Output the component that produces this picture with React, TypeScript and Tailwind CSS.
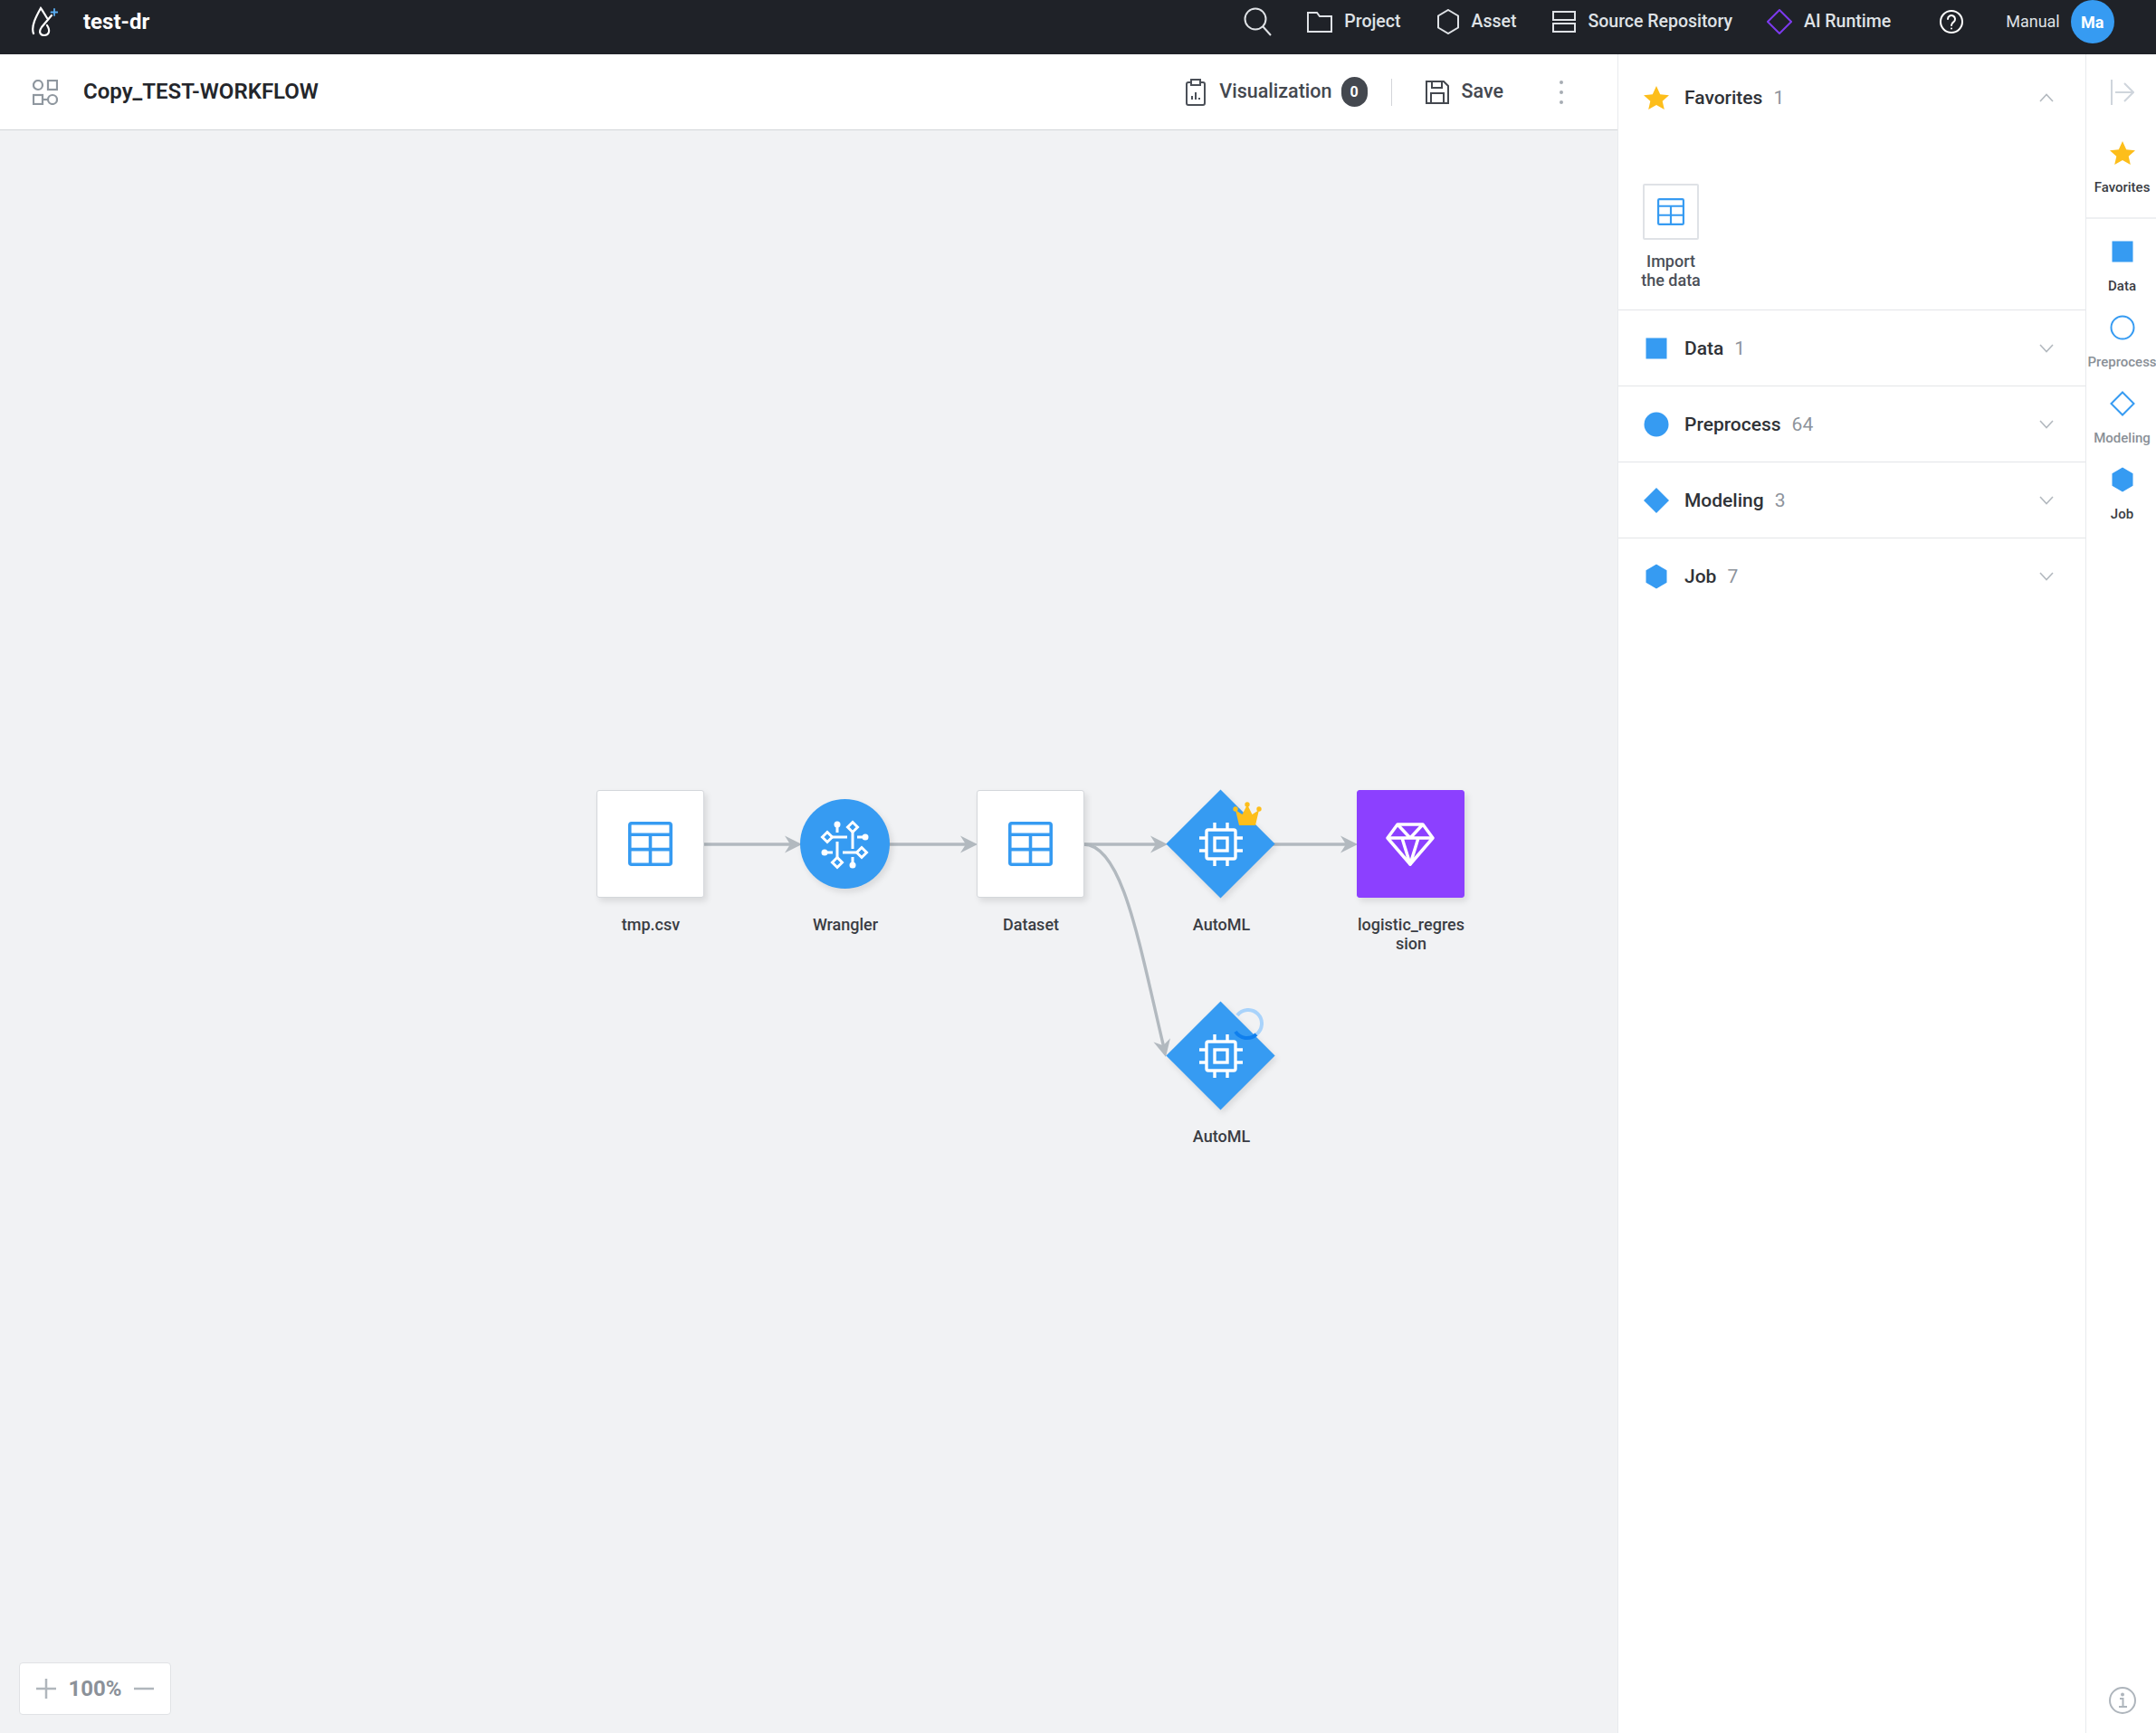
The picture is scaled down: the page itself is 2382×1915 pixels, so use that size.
import type { ReactNode } from "react";

const BLUE = "#369bf2";

function Star({ className }: { className: string }) {
  return (
    <svg viewBox="0 0 28 26" className={className} fill="#fdbe1b">
      <path d="M14 0l4.200 9.200 9.800 1-7.300 6.600 2.100 9.200-8.800-5-8.800 5 2.100-9.200L0 10.200l9.800-1z" />
    </svg>
  );
}

function Shape({ kind, outline }: { kind: "square" | "circle" | "diamond" | "hexagon"; outline?: boolean }) {
  const paint = outline
    ? { fill: "none", stroke: BLUE, strokeWidth: 2 }
    : { fill: BLUE };
  return (
    <svg viewBox="0 0 28 28" className="h-[28px] w-[28px]">
      {kind === "square" && <rect x="2.500" y="2.500" width="23" height="23" {...paint} />}
      {kind === "circle" && <circle cx="14" cy="14" r={outline ? 12.500 : 13.500} {...paint} />}
      {kind === "diamond" && <path d={outline ? "M14 1.500L26.500 14 14 26.500 1.500 14z" : "M14 0L28 14 14 28 0 14z"} {...paint} />}
      {kind === "hexagon" && <path d="M14 0.500L25.500 7.200V20.800L14 27.500 2.500 20.800V7.200z" {...paint} />}
    </svg>
  );
}

function TableIcon({ className, stroke = 3.500 }: { className: string; stroke?: number }) {
  return (
    <svg viewBox="0 0 48 48" className={className} fill="none" stroke={BLUE} strokeWidth={stroke}>
      <rect x="1.750" y="1.750" width="44.500" height="44.500" rx="2" />
      <path d="M1.500 14h45M1.500 30h45M24 14v32" />
    </svg>
  );
}

function ChipIcon() {
  return (
    <svg viewBox="0 0 48 48" className="h-[48px] w-[48px]" fill="none" stroke="#fff" strokeWidth="3.400">
      <rect x="8" y="8" width="32" height="32" rx="2" />
      <rect x="17" y="17" width="14" height="14" />
      <path d="M17 0v8M31 0v8M17 40v8M31 40v8M0 17h8M0 31h8M40 17h8M40 31h8" />
    </svg>
  );
}

function WranglerIcon() {
  return (
    <svg viewBox="0 0 60 60" className="h-[60px] w-[60px]" fill="none" stroke="#fff" strokeWidth="3">
      <path d="M11 22H33M22 9v8M39 11V35M44 22h8M8 39h9M22 27V50M28 39H48M39 44v8" />
      <g fill={BLUE}>
        <path d="M11 16.500L16.500 22 11 27.500 5.500 22z" />
        <path d="M39 5.500L44.500 11 39 16.500 33.500 11z" />
        <path d="M22 44.500L27.500 50 22 55.500 16.500 50z" />
        <path d="M49 33.500L54.500 39 49 44.500 43.500 39z" />
      </g>
      <g fill="#fff" stroke="none">
        <circle cx="22" cy="8" r="3.500" />
        <circle cx="53" cy="22" r="3.500" />
        <circle cx="8" cy="39" r="3.500" />
        <circle cx="39" cy="53" r="3.500" />
      </g>
    </svg>
  );
}

function GemIcon() {
  return (
    <svg viewBox="0 0 54 48" className="h-[48px] w-[54px]" fill="none" stroke="#fff" strokeWidth="3.500" strokeLinejoin="round">
      <path d="M13 2H41L52 17 27 46 2 17z" />
      <path d="M2 17H52M13 2L27 17 41 2M18 17L27 46 36 17" />
    </svg>
  );
}

function Crown() {
  return (
    <svg viewBox="0 0 32 26" className="h-[26px] w-[32px]" fill="#fdbe1b">
      <path d="M7 26L3 9l7.500 5L16 3l5.500 11L29 9l-4 17z" />
      <circle cx="3" cy="8" r="2.700" />
      <circle cx="16" cy="3" r="2.700" />
      <circle cx="29" cy="8" r="2.700" />
    </svg>
  );
}

function Spinner() {
  return (
    <svg viewBox="0 0 36 36" className="h-[36px] w-[36px]" fill="none" strokeWidth="4">
      <path d="M7 8A15 15 0 1 1 28 29" stroke="#a9d3fb" />
      <path d="M28 29A15 15 0 0 1 5 26" stroke="#0f7fee" />
    </svg>
  );
}

function SquareNode({ className, children }: { className: string; children: ReactNode }) {
  return (
    <div className={`flex h-[119px] w-[119px] items-center justify-center rounded-[3px] border shadow-[3px_4px_7px_rgba(0,0,0,0.1)] ${className}`}>
      {children}
    </div>
  );
}

function DiamondNode() {
  return (
    <div className="relative flex h-[119px] w-[119px] items-center justify-center">
      <div className="absolute left-[17px] top-[17px] h-[85px] w-[85px] rotate-45 bg-[#369bf2] shadow-[4px_1px_7px_rgba(0,0,0,0.1)]" />
      <div className="relative">
        <ChipIcon />
      </div>
    </div>
  );
}

function NodeLabel({ children }: { children: ReactNode }) {
  return (
    <div className="mt-[19px] w-[120px] translate-x-px break-all text-center text-[18px] font-medium leading-[21px] text-[#3a3d43]">
      {children}
    </div>
  );
}

function Arrow({ x, y, angle = 0 }: { x: number; y: number; angle?: number }) {
  return <path d="M0 0L-19 -9.500L-13 0L-19 9.500z" fill="#b2b9bf" transform={`translate(${x} ${y}) rotate(${angle})`} />;
}

function Edges() {
  return (
    <svg className="absolute inset-0 h-full w-full" viewBox="0 144 1787 1771" fill="none" stroke="#b2b9bf" strokeWidth="3.400">
      <path d="M776 933H875" />
      <path d="M982 933H1070" />
      <path d="M1197 933H1280" />
      <path d="M1406 933H1490" />
      <path d="M1197 933C1240 933 1258 1040 1286 1158" />
      <g stroke="none">
        <Arrow x={886} y={933} />
        <Arrow x={1080} y={933} />
        <Arrow x={1290} y={933} />
        <Arrow x={1500} y={933} />
        <Arrow x={1288} y={1168} angle={77} />
      </g>
    </svg>
  );
}

function NavItem({ icon, label, className }: { icon: ReactNode; label: string; className: string }) {
  return (
    <div className={`flex items-center gap-[13px] ${className}`}>
      {icon}
      <span className="text-[19.500px] font-medium text-[#dfe2e6]">{label}</span>
    </div>
  );
}

function TopBar() {
  return (
    <header className="flex h-[60px] items-center bg-[#1f2228] pb-[12px]">
      <svg viewBox="0 0 30 34" className="ml-[34px] h-[34px] w-[30px]" fill="none" stroke="#fff" strokeWidth="2.200" strokeLinecap="round">
        <path d="M3 30C0 22 6 11 11 2C14 6 16 10 18 13" />
        <path d="M23 10L12 23C8 29 11 32 15 32C20 32 22 27 18 21" />
        <path d="M26 3v7M22.500 6.500h7" stroke="#5aaef2" strokeWidth="1.800" />
      </svg>
      <span className="ml-[28px] text-[24px] font-bold leading-none text-white">test-dr</span>

      <svg viewBox="0 0 32 32" className="ml-[1208px] h-[32px] w-[32px]" fill="none" stroke="#dfe2e6" strokeWidth="2">
        <circle cx="14" cy="13" r="11.500" />
        <path d="M22 21l9 10" />
      </svg>
      <NavItem
        className="ml-[39px]"
        label="Project"
        icon={
          <svg viewBox="0 0 28 24" className="h-[24px] w-[28px]" fill="none" stroke="#dfe2e6" strokeWidth="2">
            <path d="M1 2h10l3 4h13v17H1z" />
          </svg>
        }
      />
      <NavItem
        className="ml-[41px]"
        label="Asset"
        icon={
          <svg viewBox="0 0 24 28" className="h-[28px] w-[24px]" fill="none" stroke="#dfe2e6" strokeWidth="2">
            <path d="M12 1l11 6.500v13L12 27 1 20.500v-13z" />
          </svg>
        }
      />
      <NavItem
        className="ml-[40px]"
        label="Source Repository"
        icon={
          <svg viewBox="0 0 26 24" className="h-[24px] w-[26px]" fill="none" stroke="#dfe2e6" strokeWidth="2">
            <rect x="1" y="1" width="24" height="9" />
            <rect x="1" y="14" width="24" height="9" />
          </svg>
        }
      />
      <NavItem
        className="ml-[38px]"
        label="AI Runtime"
        icon={
          <svg viewBox="0 0 28 28" className="h-[28px] w-[28px]" fill="none" stroke="#7c3aed" strokeWidth="2">
            <path d="M14 1l13 13-13 13L1 14z" />
          </svg>
        }
      />
      <svg viewBox="0 0 26 26" className="ml-[54px] h-[26px] w-[26px]" fill="none" stroke="#fff" strokeWidth="2">
        <circle cx="13" cy="13" r="12" />
        <path d="M9 10a4 4 0 1 1 6.500 3.200c-1.700 1.100-2.500 1.900-2.500 3.800" strokeLinecap="round" />
        <circle cx="13" cy="20.500" r="1" fill="#fff" stroke="none" />
      </svg>
      <span className="mb-[2px] ml-[47px] text-[18px] text-[#dfe2e6]">Manual</span>
      <div className="ml-[12px] flex h-[48px] w-[48px] items-center justify-center rounded-full bg-[#369bf2] text-[18px] font-bold text-white">
        Ma
      </div>
    </header>
  );
}

function Toolbar() {
  return (
    <div className="flex h-[84px] items-center border-b border-[#d3d5d9] bg-white pl-[36px]">
      <svg viewBox="0 0 28 28" className="h-[28px] w-[28px]" fill="none" stroke="#8f979f" strokeWidth="2.200">
        <circle cx="6" cy="6" r="5" />
        <rect x="17" y="1" width="10" height="10" />
        <rect x="1" y="17" width="10" height="10" />
        <circle cx="22" cy="22" r="5" />
        <path d="M11 22h6" />
      </svg>
      <h1 className="mb-[2px] ml-[28px] text-[24px] font-semibold leading-none text-[#24262b]">Copy_TEST-WORKFLOW</h1>

      <svg viewBox="0 0 22 30" className="ml-auto h-[30px] w-[22px]" fill="none" stroke="#4b5058" strokeWidth="2">
        <rect x="1" y="4" width="20" height="25" rx="2" />
        <rect x="6" y="1" width="10" height="6" fill="#fff" />
        <path d="M7 23v-4M11 23v-8M15 23v-2" />
      </svg>
      <span className="ml-[15px] text-[21.500px] font-medium text-[#44484f]">Visualization</span>
      <span className="ml-[10px] flex h-[33px] w-[29px] items-center justify-center rounded-full bg-[#44484f] text-[16px] font-bold text-white">0</span>
      <span className="ml-[26px] h-[30px] w-px bg-[#d3d5d9]" />
      <svg viewBox="0 0 26 26" className="ml-[37px] h-[26px] w-[26px]" fill="none" stroke="#44484f" strokeWidth="2">
        <path d="M1 1h19l5 5v19H1z" />
        <path d="M7 1v7h11V1M6 25V14h14v11" />
      </svg>
      <span className="ml-[14px] text-[21.500px] font-medium text-[#44484f]">Save</span>
      <div className="ml-[62px] mr-[60px] flex flex-col gap-[7px]">
        <span className="h-[4px] w-[4px] rounded-full bg-[#a7adb4]" />
        <span className="h-[4px] w-[4px] rounded-full bg-[#a7adb4]" />
        <span className="h-[4px] w-[4px] rounded-full bg-[#a7adb4]" />
      </div>
    </div>
  );
}

function Canvas() {
  return (
    <div className="relative flex-1 bg-[#f1f2f4]">
      <Edges />

      <div className="absolute left-[658px] top-[729px] flex flex-col items-center">
        <SquareNode className="border-[#d4d7db] bg-white">
          <TableIcon className="h-[49px] w-[49px]" />
        </SquareNode>
        <NodeLabel>tmp.csv</NodeLabel>
      </div>

      <div className="absolute left-[873px] top-[729px] flex flex-col items-center">
        <div className="flex h-[119px] w-[119px] items-center justify-center">
          <div className="flex h-[99px] w-[99px] items-center justify-center rounded-full bg-[#369bf2] shadow-[3px_4px_7px_rgba(0,0,0,0.1)]">
            <WranglerIcon />
          </div>
        </div>
        <NodeLabel>Wrangler</NodeLabel>
      </div>

      <div className="absolute left-[1078px] top-[729px] flex flex-col items-center">
        <SquareNode className="border-[#d4d7db] bg-white">
          <TableIcon className="h-[49px] w-[49px]" />
        </SquareNode>
        <NodeLabel>Dataset</NodeLabel>
      </div>

      <div className="absolute left-[1288.500px] top-[729px] flex flex-col items-center">
        <DiamondNode />
        <NodeLabel>AutoML</NodeLabel>
        <div className="absolute left-[73px] top-[13px]">
          <Crown />
        </div>
      </div>

      <div className="absolute left-[1498px] top-[729px] flex flex-col items-center">
        <SquareNode className="border-[#8c40ff] bg-[#8c40ff]">
          <GemIcon />
        </SquareNode>
        <NodeLabel>logistic_regression</NodeLabel>
      </div>

      <div className="absolute left-[1288.500px] top-[963px] flex flex-col items-center">
        <DiamondNode />
        <NodeLabel>AutoML</NodeLabel>
        <div className="absolute left-[71px] top-[7px]">
          <Spinner />
        </div>
      </div>

      <div className="absolute bottom-[20px] left-[21px] flex h-[58px] w-[168px] items-center justify-center gap-[13px] rounded-[4px] border border-[#e0e2e5] bg-white">
        <svg viewBox="0 0 22 22" className="h-[22px] w-[22px]" stroke="#b0b6bc" strokeWidth="2.500">
          <path d="M0 11h22M11 0v22" />
        </svg>
        <span className="text-[24px] font-bold text-[#8b9199]">100%</span>
        <svg viewBox="0 0 22 22" className="h-[22px] w-[22px]" stroke="#b0b6bc" strokeWidth="2.500">
          <path d="M0 11h22" />
        </svg>
      </div>
    </div>
  );
}

function Chevron({ up }: { up?: boolean }) {
  return (
    <svg viewBox="0 0 16 10" className="h-[10px] w-[16px]" fill="none" stroke="#b3b9bf" strokeWidth="1.600">
      <path d={up ? "M1 9l7-7.500L15 9" : "M1 1l7 7.500L15 1"} />
    </svg>
  );
}

function PanelHeader({ icon, label, count, up }: { icon: ReactNode; label: string; count: string; up?: boolean }) {
  return (
    <div className="flex w-full items-center pl-[28px] pr-[35px]">
      {icon}
      <span className="ml-[17px] translate-y-px text-[21px] font-medium text-[#2f3237]">{label}</span>
      <span className="ml-[12px] translate-y-px text-[21px] text-[#8d939b]">{count}</span>
      <span className="ml-auto">
        <Chevron up={up} />
      </span>
    </div>
  );
}

const groups = [
  { label: "Data", count: "1", kind: "square" as const },
  { label: "Preprocess", count: "64", kind: "circle" as const },
  { label: "Modeling", count: "3", kind: "diamond" as const },
  { label: "Job", count: "7", kind: "hexagon" as const },
];

function Panel() {
  return (
    <aside className="w-[517px] border-l border-[#e8eaed] bg-white">
      <div className="h-[283px] border-b border-[#e3e5e8]">
        <div className="flex h-[96px] items-center">
          <PanelHeader icon={<Star className="h-[26px] w-[28px]" />} label="Favorites" count="1" up />
        </div>
        <div className="ml-[27px] mt-[47px] flex w-[62px] flex-col items-center">
          <div className="flex h-[62px] w-[62px] items-center justify-center rounded-[2px] border-2 border-[#dfe2e6]">
            <TableIcon className="h-[30px] w-[30px]" stroke={3.500} />
          </div>
          <div className="mt-[13px] whitespace-nowrap text-center text-[18px] font-medium leading-[21px] text-[#4b5058]">
            Import
            <br />
            the data
          </div>
        </div>
      </div>
      {groups.map((g) => (
        <div key={g.label} className="flex h-[84px] items-center border-b border-[#e3e5e8] last:border-b-0">
          <PanelHeader icon={<Shape kind={g.kind} />} label={g.label} count={g.count} />
        </div>
      ))}
    </aside>
  );
}

function RailItem({ kind, label, active, outline }: { kind: "square" | "circle" | "diamond" | "hexagon"; label: string; active?: boolean; outline?: boolean }) {
  return (
    <div className="flex h-[84px] flex-col items-center pt-[22px]">
      <Shape kind={kind} outline={outline} />
      <span className={`mt-[16px] text-[15px] font-medium leading-[16px] whitespace-nowrap ${active ? "text-[#3a3d43]" : "text-[#8a9097]"}`}>{label}</span>
    </div>
  );
}

function Rail() {
  return (
    <aside className="flex w-[78px] flex-col overflow-hidden border-l border-[#e8eaed] bg-white pl-[2px]">
      <div className="flex h-[84px] items-center justify-center">
        <svg viewBox="0 0 26 28" className="h-[28px] w-[26px]" fill="none" stroke="#cfd5dc" strokeWidth="2">
          <path d="M1 0v28M5 14h20M15 4l10 10-10 10" />
        </svg>
      </div>
      <div className="-ml-[2px] flex h-[98px] flex-col items-center border-b-2 border-[#eef0f2] pl-[2px] pt-[12px]">
        <Star className="h-[26px] w-[28px]" />
        <span className="mt-[17px] text-[15px] font-medium leading-[16px] text-[#3a3d43]">Favorites</span>
      </div>
      <RailItem kind="square" label="Data" active />
      <RailItem kind="circle" label="Preprocess" outline />
      <RailItem kind="diamond" label="Modeling" outline />
      <RailItem kind="hexagon" label="Job" active />
      <div className="mt-auto flex justify-center pb-[21px]">
        <svg viewBox="0 0 30 30" className="h-[30px] w-[30px]" fill="none" stroke="#aeb5bc" strokeWidth="2">
          <circle cx="15" cy="15" r="14" />
          <path d="M12 13h3.500v9M11 22h9" />
          <circle cx="15" cy="8.500" r="1" fill="#aeb5bc" />
        </svg>
      </div>
    </aside>
  );
}

export default function App() {
  return (
    <div className="flex h-[1915px] w-[2382px] flex-col overflow-hidden bg-white font-['Roboto',sans-serif]">
      <TopBar />
      <div className="flex min-h-0 flex-1">
        <main className="flex w-[1787px] flex-col">
          <Toolbar />
          <Canvas />
        </main>
        <Panel />
        <Rail />
      </div>
    </div>
  );
}
